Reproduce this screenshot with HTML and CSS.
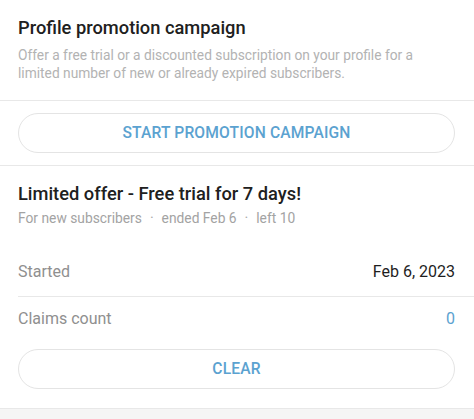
FILE: index.html
```html
<!DOCTYPE html>
<html>
<head>
<meta charset="utf-8">
<link rel="stylesheet" href="styles.css">
</head>
<body>
<div class="page">
  <section class="intro">
    <h1 class="title">Profile promotion campaign</h1>
    <p class="desc">Offer a free trial or a discounted subscription on your profile for a limited number of new or already expired subscribers.</p>
  </section>
  <section class="action">
    <button class="pill">START PROMOTION CAMPAIGN</button>
  </section>
  <section class="offer">
    <h2 class="offer-title">Limited offer - Free trial for 7 days!</h2>
    <div class="meta">
      <span>For new subscribers</span><span class="dot">•</span><span>ended Feb 6</span><span class="dot">•</span><span>left 10</span>
    </div>
    <div class="rows">
      <div class="row row-first">
        <span class="label">Started</span>
        <span class="value">Feb 6, 2023</span>
      </div>
      <div class="row">
        <span class="label">Claims count</span>
        <span class="value value-link">0</span>
      </div>
    </div>
    <div class="offer-action">
      <button class="pill">CLEAR</button>
    </div>
  </section>
  <div class="footer-gap"></div>
</div>
</body>
</html>
```
FILE: styles.css
```css
* { box-sizing: border-box; }
html, body { margin: 0; padding: 0; background: #ffffff; }
body { font-family: Roboto, "Noto Sans", Arial, sans-serif; color: #1f1f1f; }
.page { width: 474px; height: 419px; overflow: hidden; background: #fff; }

.intro { padding: 16px 19px 18px 18px; border-bottom: 1px solid #e8e8e8; }
.title { margin: 0; font-size: 18.3px; line-height: 24px; font-weight: 500; color: #202020; }
.desc { margin: 7px 0 0; font-size: 13.75px; line-height: 17.5px; color: #b3b3b3; font-weight: 400; }

.action { padding: 12px 19px 12px 18px; border-bottom: 1px solid #e8e8e8; }
.pill {
  display: block; width: 100%; height: 40px; border: 1px solid #e4e4e4; border-radius: 20px;
  background: #fff; color: #5ba2d0; font-family: inherit; font-size: 15.6px; font-weight: 500;
  letter-spacing: 0.15px; padding: 0; cursor: pointer;
}

.offer { padding: 16px 0 0 18px; border-bottom: 1px solid #e8e8e8; }
.offer-title { margin: 0; font-size: 18.3px; line-height: 24px; font-weight: 500; color: #202020; }
.meta { margin-top: 3px; font-size: 13.8px; line-height: 18px; color: #a3a3a3; display: flex; }
.dot { font-size: 8px; margin: 0 8.5px; color: #a8a8a8; }

.rows { margin-top: 23px; }
.row { display: flex; justify-content: space-between; align-items: center; padding: 12px 19px 12px 0; line-height: 20px; }
.row-first { border-bottom: 1px solid #e8e8e8; padding-bottom: 14px; padding-top: 12px; }
.label { font-size: 16px; color: #8f8f8f; }
.value { font-size: 16px; color: #1e1e1e; }
.value-link { color: #5ba2d0; }

.offer-action { padding: 7.5px 19px 19px 0; }
.footer-gap { height: 20px; background: #f5f5f5; }
```
